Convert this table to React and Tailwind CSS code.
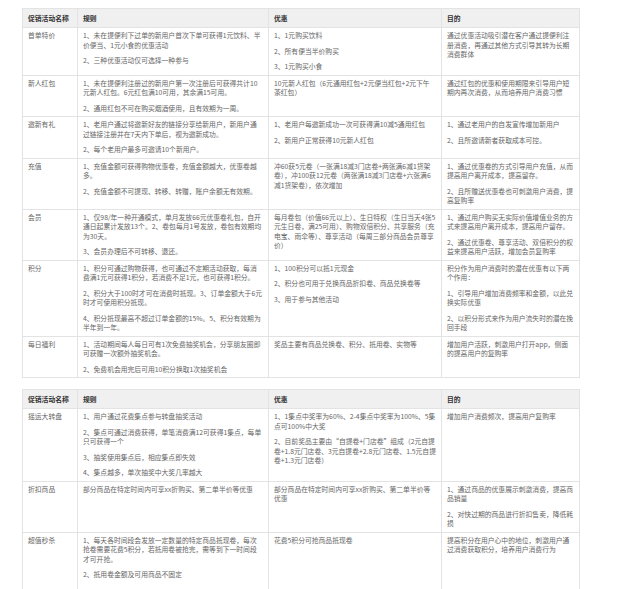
import React from 'react';

const headers = ['促销活动名称', '规则', '优惠', '目的'];

const tableOne = [
  {
    name: '首单特价',
    rule: ['1、未在提便利下过单的新用户首次下单可获得1元饮料、半价便当、1元小食的优惠活动', '2、三种优惠活动仅可选择一种参与'],
    offer: ['1、1元购买饮料', '2、所有便当半价购买', '3、1元购买小食'],
    goal: ['通过优惠活动吸引潜在客户通过提便利注册消费，再通过其他方式引导其转为长期消费群体'],
  },
  {
    name: '新人红包',
    rule: ['1、未在提便利注册过的新用户第一次注册后可获得共计10元新人红包。6元红包满10可用，其余满15可用。', '2、通用红包不可在购买烟酒使用，且有效期为一周。'],
    offer: ['10元新人红包（6元通用红包+2元便当红包+2元下午茶红包）'],
    goal: ['通过红包的优惠和使用期限来引导用户短期内再次消费，从而培养用户消费习惯'],
  },
  {
    name: '邀新有礼',
    rule: ['1、老用户通过将邀新好友的链接分享给新用户，新用户通过链接注册并在7天内下单后，视为邀新成功。', '2、每个老用户最多可邀请10个新用户。'],
    offer: ['1、老用户每邀新成功一次可获得满10减5通用红包', '2、新用户正常获得10元新人红包'],
    goal: ['1、通过老用户的自发宣传增加新用户', '2、且所邀请新者获取成本可控。'],
  },
  {
    name: '充值',
    rule: ['1、充值金额可获得购物优惠卷，充值金额越大，优惠卷越多。', '2、充值金额不可提现、转移、转赠，账户余额无有效期。'],
    offer: ['冲60获5元卷（一张满18减3门店卷+两张满6减1货架卷），冲100获12元卷（两张满18减3门店卷+六张满6减1货架卷），依次增加'],
    goal: ['1、通过优惠卷的方式引导用户充值，从而提高用户离开成本，提高留存。', '2、且所赠送优惠卷也可刺激用户消费，提高复购率'],
  },
  {
    name: '会员',
    rule: ['1、仅98/年一种开通模式，单月发放66元优惠卷礼包，自开通日起累计发放13个。2、卷包每月1号发放，卷包有效期均为30天。', '3、会员办理后不可转移、退还。'],
    offer: ['每月卷包（价值66元以上）、生日特权（生日当天4张5元生日卷，满25可用）、购物双倍积分、共享服务（充电宝、雨伞等）、尊享活动（每周三部分商品会员尊享价）'],
    goal: ['1、通过用户购买无实际价值增值业务的方式来提高用户离开成本，提高用户留存。', '2、通过优惠卷、尊享活动、双倍积分的权益来提高用户活跃，增加会员复购率'],
  },
  {
    name: '积分',
    rule: ['1、积分可通过购物获得，也可通过不定期活动获取，每消费满1元可获得1积分，若消费不足1元，也可获得1积分。', '2、积分大于100时才可在消费时抵现。3、订单金额大于6元时才可使用积分抵现。', '4、积分抵现最高不超过订单金额的15%。5、积分有效期为半年到一年。'],
    offer: ['1、100积分可以抵1元现金', '2、积分也可用于兑换商品折扣卷、商品兑换卷等', '3、用于参与其他活动'],
    goal: ['积分作为用户消费时的潜在优惠有以下两个作用：', '1、引导用户增加消费频率和金额，以此兑换实际优惠', '2、以积分形式来作为用户流失时的潜在挽回手段'],
  },
  {
    name: '每日福利',
    rule: ['1、活动期间每人每日可有1次免费抽奖机会，分享朋友圈即可获赠一次额外抽奖机会。', '2、免费机会用完后可用10积分换取1次抽奖机会'],
    offer: ['奖品主要有商品兑换卷、积分、抵用卷、实物等'],
    goal: ['增加用户活跃，刺激用户打开app，侧面的提高用户的复购率'],
  },
];

const tableTwo = [
  {
    name: '摇运大转盘',
    rule: ['1、用户通过花费集点参与转盘抽奖活动', '2、集点可通过消费获得，单笔消费满12可获得1集点，每单只可获得一个', '3、抽奖使用集点后，相应集点即失效', '4、集点越多，单次抽奖中大奖几率越大'],
    offer: ['1、1集点中奖率为60%、2-4集点中奖率为100%、5集点可100%中大奖', '2、目前奖品主要由“自提卷+门店卷”组成（2元自提卷+1.8元门店卷、3元自提卷+2.8元门店卷、1.5元自提卷+1.3元门店卷）'],
    goal: ['增加用户消费频次，提高用户复购率'],
  },
  {
    name: '折扣商品',
    rule: ['部分商品在特定时间内可享xx折购买、第二单半价等优惠'],
    offer: ['部分商品在特定时间内可享xx折购买、第二单半价等优惠'],
    goal: ['1、通过商品的优惠展示刺激消费，提高商品销量', '2、对快过期的商品进行折扣售卖，降低耗损'],
  },
  {
    name: '超值秒杀',
    rule: ['1、每天各时间段会发放一定数量的特定商品抵现卷，每次抢卷需要花费5积分，若抵用卷被抢完，需等到下一时间段才可开抢。', '2、抵用卷金额及可用商品不固定'],
    offer: ['花费5积分可抢商品抵现卷'],
    goal: ['提高积分在用户心中的地位，刺激用户通过消费获取积分，培养用户消费行为'],
    tall: true,
  },
];

// cell text: a stack of short paragraphs
const Paras = ({ items }) => (
  <div className="flex flex-col gap-[6px]">
    {items.map((t, i) => (
      <p key={i} className="leading-[9.5px]">
        {t}
      </p>
    ))}
  </div>
);

const cell = 'border border-[#e3e3e3] align-top px-[5px] pt-[3px] pb-[3px]';

const PromoTable = ({ rows, className }) => (
  <table className={`w-[557px] table-fixed border-collapse ml-[22px] ${className}`}>
    <colgroup>
      <col className="w-[55px]" />
      <col className="w-[191px]" />
      <col className="w-[173px]" />
      <col className="w-[138px]" />
    </colgroup>
    <thead>
      <tr className="bg-[#f0f0f0] h-[19px]">
        {headers.map((h) => (
          <th key={h} className="border border-[#e3e3e3] px-[5px] text-left font-bold text-[#333]">
            {h}
          </th>
        ))}
      </tr>
    </thead>
    <tbody>
      {rows.map((r) => (
        <tr key={r.name} className={r.tall ? 'h-[64px]' : ''}>
          <td className={cell}>
            <p className="leading-[9.5px]">{r.name}</p>
          </td>
          <td className={cell}>
            <Paras items={r.rule} />
          </td>
          <td className={cell}>
            <Paras items={r.offer} />
          </td>
          <td className={cell}>
            <Paras items={r.goal} />
          </td>
        </tr>
      ))}
    </tbody>
  </table>
);

export default function App() {
  return (
    <div className="bg-white min-h-[589px] pt-[8px] text-[6.8px] text-[#666] font-['Noto_Sans_CJK_SC','Noto_Sans',sans-serif]">
      <PromoTable rows={tableOne} />
      <PromoTable rows={tableTwo} className="mt-[11px]" />
    </div>
  );
}
